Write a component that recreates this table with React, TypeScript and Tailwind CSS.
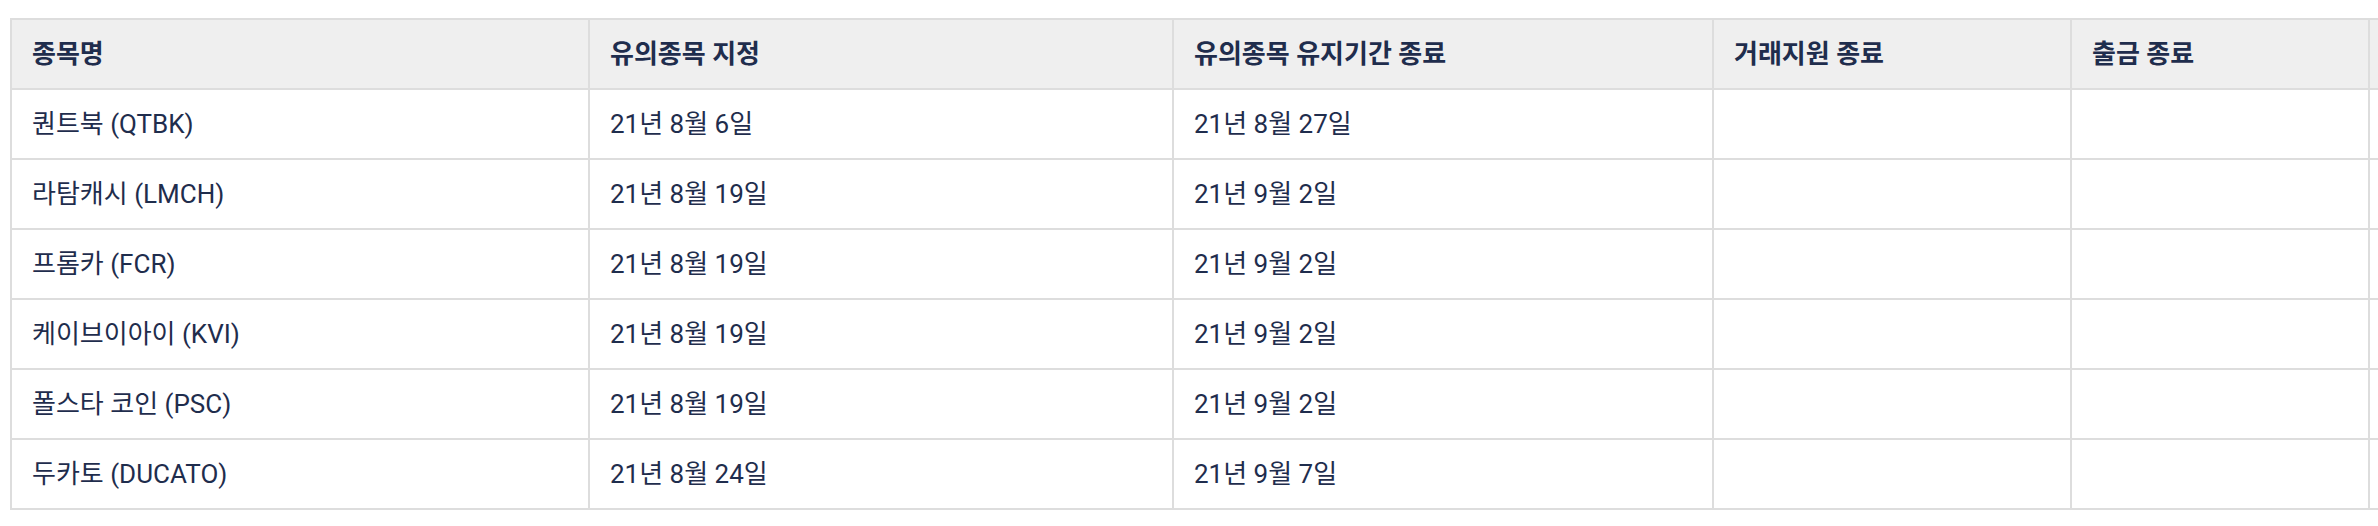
const columns = [
  { key: 'name', title: '종목명', width: 'w-[578px]' },
  { key: 'start', title: '유의종목 지정', width: 'w-[584px]' },
  { key: 'end', title: '유의종목 유지기간 종료', width: 'w-[540px]' },
  { key: 'trade', title: '거래지원 종료', width: 'w-[358px]' },
  { key: 'withdraw', title: '출금 종료', width: 'w-[298px]' },
  { key: 'extra', title: '', width: 'w-[300px]' },
]

const rows = [
  ['퀀트북 (QTBK)', '21년 8월 6일', '21년 8월 27일'],
  ['라탐캐시 (LMCH)', '21년 8월 19일', '21년 9월 2일'],
  ['프롬카 (FCR)', '21년 8월 19일', '21년 9월 2일'],
  ['케이브이아이 (KVI)', '21년 8월 19일', '21년 9월 2일'],
  ['폴스타 코인 (PSC)', '21년 8월 19일', '21년 9월 2일'],
  ['두카토 (DUCATO)', '21년 8월 24일', '21년 9월 7일'],
]

export default function App() {
  return (
    <div className="min-h-[526px] w-full overflow-hidden bg-white pl-[10px] pt-[18px] font-['Roboto','Noto_Sans_CJK_KR',sans-serif] text-[#1f2d4d]">
      <table className="w-[2658px] table-fixed border-collapse text-left text-[26px]">
        <colgroup>
          {columns.map((c) => (
            <col key={c.key} className={c.width} />
          ))}
        </colgroup>
        <thead>
          <tr className="h-[70px] bg-[#efefef]">
            {columns.map((c) => (
              <th key={c.key} className="border-2 border-[#dddddd] px-5 font-bold">
                {c.title}
              </th>
            ))}
          </tr>
        </thead>
        <tbody>
          {rows.map((r) => (
            <tr key={r[0]} className="h-[70px]">
              {columns.map((c, i) => (
                <td key={c.key} className="border-2 border-[#dddddd] px-5">
                  {r[i] ?? ''}
                </td>
              ))}
            </tr>
          ))}
        </tbody>
      </table>
    </div>
  )
}
